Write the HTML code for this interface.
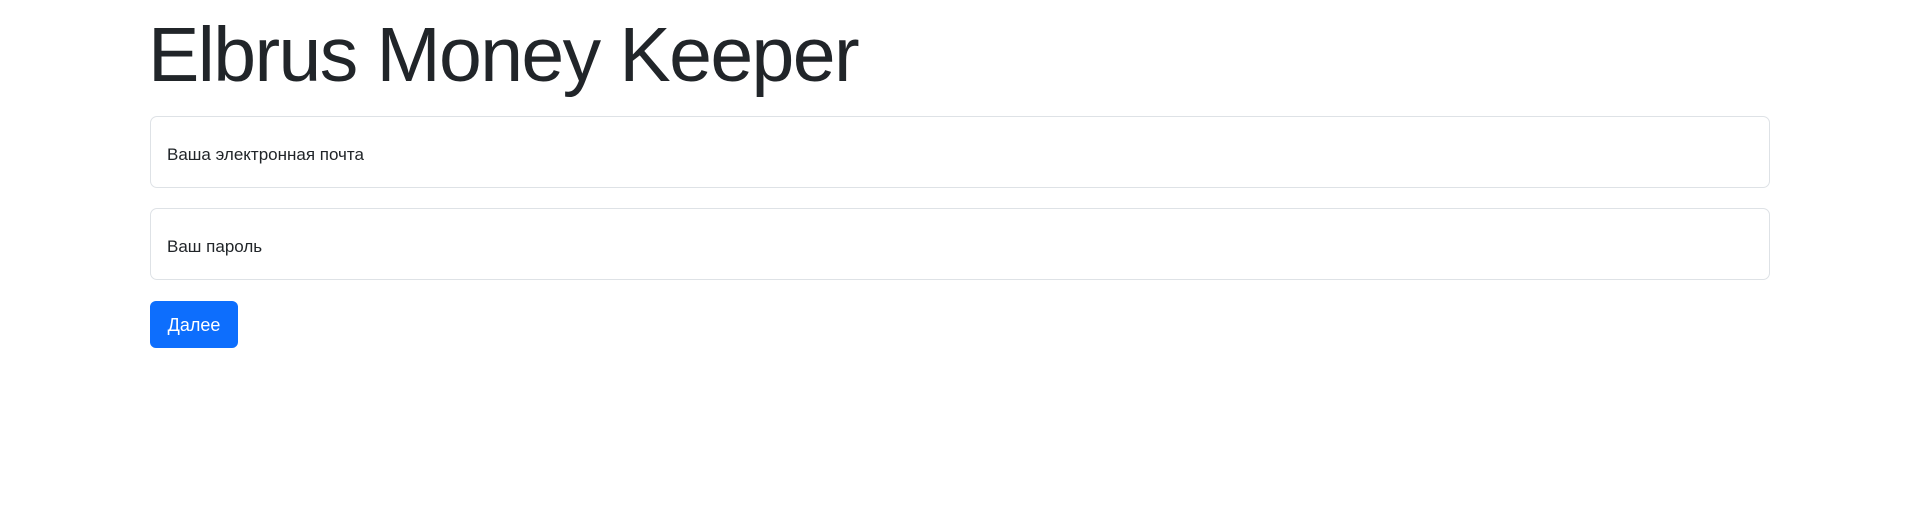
<!DOCTYPE html>
<html><head><meta charset="utf-8"><style>
body{margin:0;background:#fff;font-family:"Liberation Sans",sans-serif;color:#212529;}
h1{position:absolute;left:148px;top:5px;margin:0;font-size:77px;font-weight:300;letter-spacing:-1.6px;line-height:100px;white-space:nowrap;}
.in{position:absolute;left:150px;width:1618px;height:70px;border:1px solid #dee2e6;border-radius:7px;box-sizing:content-box;}
.in span{position:absolute;left:16px;top:28px;font-size:17px;line-height:20px;}
.btn{position:absolute;left:150px;top:301px;width:88px;height:47px;background:#0d6efd;border-radius:6px;color:#fff;font-size:18px;line-height:49px;text-align:center;}
</style></head><body>
<h1>Elbrus Money Keeper</h1>
<div class="in" style="top:116px"><span>Ваша электронная почта</span></div>
<div class="in" style="top:208px"><span>Ваш пароль</span></div>
<div class="btn">Далее</div>
</body></html>
